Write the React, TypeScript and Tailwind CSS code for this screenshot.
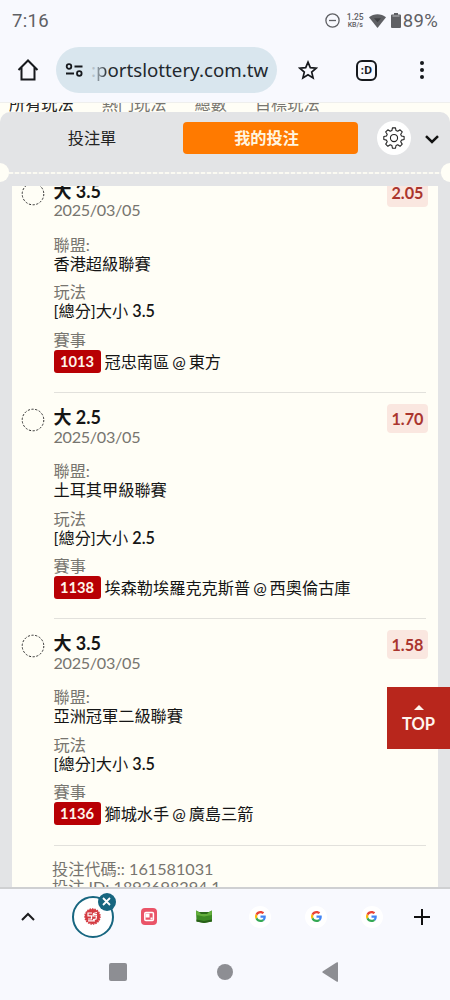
import React from 'react';
import clsx from 'clsx';

type Bet = {
  pick: string;
  date: string;
  odds: string;
  league: string;
  play: string;
  playValue: string;
  code: string;
  match: string;
};

const BETS: Bet[] = [
  { pick: '大 3.5', date: '2025/03/05', odds: '2.05', league: '香港超級聯賽', play: '[總分]大小', playValue: '3.5', code: '1013', match: '冠忠南區 @ 東方' },
  { pick: '大 2.5', date: '2025/03/05', odds: '1.70', league: '土耳其甲級聯賽', play: '[總分]大小', playValue: '2.5', code: '1138', match: '埃森勒埃羅克克斯普 @ 西奧倫古庫' },
  { pick: '大 3.5', date: '2025/03/05', odds: '1.58', league: '亞洲冠軍二級聯賽', play: '[總分]大小', playValue: '3.5', code: '1136', match: '獅城水手 @ 廣島三箭' },
];

const FILTERS = ['所有玩法', '熱門玩法', '總數', '目標玩法'];

const StatusBar = () => (
  <div className="flex h-[41px] shrink-0 items-center pl-[12px] pr-[12px] font-[Roboto,sans-serif] text-[#5f6064]">
    <span className="pt-[3px] text-[18.5px] tracking-[0.3px]">7:16</span>
    <svg className="ml-auto" width="15" height="15" viewBox="0 0 15 15" fill="none" stroke="currentColor" strokeWidth="1.3">
      <circle cx="7.5" cy="7.5" r="6.6" />
      <path d="M4 7.5h7" />
    </svg>
    <div className="ml-[7px] flex w-[17px] flex-col items-center font-medium leading-[8px]">
      <span className="text-[8.5px]">1.25</span>
      <span className="text-[7px]">KB/s</span>
    </div>
    <svg className="ml-[5px]" width="17" height="14" viewBox="0 0 17 14" fill="currentColor">
      <path d="M0 3.2C4.8-.9 12.2-.9 17 3.2L8.5 14z" />
      <path d="M5 4.3h7L8.5 8.2z" fill="#3f4043" />
    </svg>
    <svg className="ml-[5px]" width="10" height="15" viewBox="0 0 10 15" fill="currentColor">
      <path d="M3 0h4v1.5h2a1 1 0 0 1 1 1V14a1 1 0 0 1-1 1H1a1 1 0 0 1-1-1V2.5a1 1 0 0 1 1-1h2z" />
      <path d="M1.5 3h7" stroke="#b9babd" />
    </svg>
    <span className="ml-[2px] pt-[3px] text-[18.5px] tracking-[0.3px]">89%</span>
  </div>
);

const Toolbar = () => (
  <div className="flex h-[61px] shrink-0 items-center pb-[3px] pl-[17px] pr-[17px] text-[#16191d]">
    <svg width="22" height="22" viewBox="0 0 22 22" fill="none" stroke="currentColor" strokeWidth="2">
      <path d="M1.5 11L11 1.5l9.500 9.500M4.500 8.500v12h13v-12" />
    </svg>
    <div className="ml-[17px] flex h-[46px] w-[221px] items-center rounded-full bg-[#d9e6ee] pl-[9px]">
      <svg width="19" height="14" viewBox="0 0 19 14" fill="none" stroke="currentColor" strokeWidth="1.8">
        <circle cx="4" cy="3.5" r="2.3" />
        <path d="M9.5 3.5h8M1 10.5h8" />
        <circle cx="14.3" cy="10.5" r="2.3" />
      </svg>
      <div className="ml-[7px] flex font-['Noto_Sans',sans-serif] text-[18.7px] text-[#22282d]">
        <span className="text-[#b5c1c9]">:</span>
        <span className="bg-gradient-to-r from-[#a3afb7] to-[#22282d] bg-clip-text text-transparent">p</span>
        <span>ortslottery.com.tw</span>
      </div>
    </div>
    <svg className="ml-[21px]" width="20" height="20" viewBox="0 0 20 20" fill="none" stroke="currentColor" strokeWidth="1.7">
      <path d="M10 2.2l2.3 5.5 5.9.5-4.500 3.900 1.400 5.800-5.100-3.100-5.100 3.100 1.400-5.800-4.500-3.900 5.900-.5z" />
    </svg>
    <div className="ml-[38px] flex h-[21px] w-[21px] items-center justify-center rounded-[6px] border-2 border-current pb-px font-['Open_Sans',sans-serif] text-[11px] font-bold leading-none">
      :D
    </div>
    <div className="ml-auto mr-[9px] flex flex-col gap-[3px]">
      <i className="h-[4px] w-[4px] rounded-full bg-current" />
      <i className="h-[4px] w-[4px] rounded-full bg-current" />
      <i className="h-[4px] w-[4px] rounded-full bg-current" />
    </div>
  </div>
);

// outline of an eight-tooth gear
const GearIcon = () => (
  <svg width="22" height="22" viewBox="0 0 24 24" fill="none" stroke="#222" strokeWidth="1.2" strokeLinejoin="round">
    <path d="M10.300 1.500h3.400l.6 3 1.900.8 2.600-1.700 2.400 2.400-1.700 2.600.8 1.900 3 .6v3.400l-3 .6-.8 1.900 1.700 2.600-2.400 2.400-2.600-1.700-1.900.8-.6 3h-3.400l-.6-3-1.900-.8L5.200 22l-2.400-2.400L4.500 17l-.8-1.900-3-.6v-3.400l3-.6.8-1.900L2.800 6l2.400-2.400 2.600 1.700 1.900-.8z" transform="translate(0.2 -0.5) scale(0.98)" />
    <circle cx="12" cy="12" r="3.9" />
  </svg>
);

const SheetHeader = () => (
  <div className="relative h-[74px] shrink-0 rounded-t-[10px] bg-[#e3e4e6]">
    <div className="flex h-[52px] items-center">
      <div className="w-[183px] pl-px text-center text-[16.2px] text-[#222]">投注單</div>
      <div className="flex h-[32px] w-[175px] items-center justify-center rounded-[4px] bg-[#ff7a00] pr-[8px] text-[16.2px] font-bold text-[#fff6e0]">
        我的投注
      </div>
      <div className="ml-[19px] flex h-[34px] w-[34px] items-center justify-center rounded-full bg-white">
        <GearIcon />
      </div>
      <svg className="ml-[14px] mt-[3px]" width="14" height="9" viewBox="0 0 14 9" fill="none" stroke="#111" strokeWidth="2.5">
        <path d="M1 1.200l6 5.800 6-5.800" />
      </svg>
    </div>
    <div className="mx-[9px] mt-[8px] h-[2px] bg-[repeating-linear-gradient(90deg,#fbfaf2_0_4px,#e9e9e8_4px_6px)]" />
    <i className="absolute -left-[9px] top-[51px] h-[19px] w-[18px] rounded-full bg-[#fffef6]" />
    <i className="absolute -right-[9px] top-[51px] h-[19px] w-[18px] rounded-full bg-[#fffef6]" />
  </div>
);

const BetRow = ({ bet }: { bet: Bet }) => (
  <div className="flex h-[226.2px] shrink-0 pl-[9px] pr-[10px]">
    <svg className="mt-[15px] shrink-0" width="24" height="24" viewBox="0 0 24 24" fill="none" stroke="#333" strokeWidth="1">
      <circle cx="12" cy="12" r="10.8" strokeDasharray="2.2 1.57" />
    </svg>
    <div className="relative ml-[8.5px] mr-[2px] flex-1 border-b border-[#e2e1dc] pt-[15px] text-[16.2px] leading-[19px] text-[#151515]">
      <div className="text-[18px] font-bold">{bet.pick}</div>
      <div className="-mt-[0.7px] tracking-[-0.3px] text-[#77756f]">{bet.date}</div>
      <div className="mt-[15.5px] text-[#77756f]">聯盟:</div>
      <div>{bet.league}</div>
      <div className="mt-[9.5px] text-[#77756f]">玩法</div>
      <div>{bet.play} <span className="font-semibold">{bet.playValue}</span></div>
      <div className="mt-[9.5px] text-[#77756f]">賽事</div>
      <div className="flex items-center whitespace-nowrap pt-px [word-spacing:-1.2px]">
        <span className="mr-[4px] flex h-[23px] w-[47px] items-center justify-center rounded-[3px] bg-[#b80004] text-[14.7px] font-bold text-[#fff4ea]">
          {bet.code}
        </span>
        {bet.match}
      </div>
      <div className="absolute -right-[2px] top-[11px] flex h-[29px] w-[41px] items-center justify-center rounded-[4px] bg-[#fae7e0] text-[16.2px] font-bold text-[#aa352e]">
        {bet.odds}
      </div>
    </div>
  </div>
);

const GoogleIcon = () => (
  <div className="flex h-[22px] w-[22px] items-center justify-center rounded-full bg-white">
    <svg width="11" height="11" viewBox="0 0 48 48">
      <path fill="#EA4335" d="M24 9.500c3.540 0 6.710 1.220 9.210 3.600l6.850-6.850C35.900 2.380 30.470 0 24 0 14.620 0 6.510 5.380 2.560 13.220l7.980 6.190C12.430 13.720 17.740 9.500 24 9.500z" />
      <path fill="#4285F4" d="M46.980 24.550c0-1.570-.15-3.090-.38-4.550H24v9.020h12.940c-.58 2.960-2.260 5.480-4.780 7.180l7.730 6c4.510-4.180 7.090-10.360 7.090-17.650z" />
      <path fill="#FBBC05" d="M10.530 28.590c-.48-1.450-.76-2.990-.76-4.590s.27-3.140.76-4.590l-7.980-6.190C.92 16.460 0 20.120 0 24c0 3.880.92 7.540 2.560 10.780l7.970-6.190z" />
      <path fill="#34A853" d="M24 48c6.480 0 11.930-2.130 15.890-5.810l-7.730-6c-2.150 1.450-4.920 2.300-8.160 2.300-6.260 0-11.570-4.220-13.470-9.910l-7.980 6.190C6.510 42.620 14.620 48 24 48z" />
    </svg>
  </div>
);

const TabStrip = () => (
  <div className="flex h-[55px] items-center pl-[21px]">
    <svg width="14" height="9" viewBox="0 0 14 9" fill="none" stroke="#1c1c1e" strokeWidth="2">
      <path d="M1 8l6-6 6 6" />
    </svg>
    <div className="ml-[30px] grid grid-cols-[repeat(6,55.8px)] items-center justify-items-center">
      <div className="relative flex h-[42px] w-[42px] items-center justify-center rounded-full border-2 border-[#176680] bg-white">
        <svg width="17" height="17" viewBox="0 0 17 17" fill="none">
          <circle cx="8.5" cy="8.5" r="7.6" fill="#d43b42" stroke="#d43b42" strokeWidth="1.4" strokeDasharray="1.5 1" />
          <path d="M8 5H4v2.800h3.500V11H4M13 4.500l-3.500 1L9 8h3.500l-.5 3-3 .7M10 6.500h3M4 12.800h7" stroke="#fff" strokeWidth="1.2" />
        </svg>
        <div className="absolute -right-[4px] -top-[5px] flex h-[18px] w-[18px] items-center justify-center rounded-full bg-[#176680]">
          <svg width="9" height="9" viewBox="0 0 9 9" stroke="#fff" strokeWidth="1.8">
            <path d="M1 1l7 7M8 1L1 8" />
          </svg>
        </div>
      </div>
      <svg width="16" height="17" viewBox="0 0 16 17" fill="none">
        <rect width="16" height="17" rx="4" fill="#ea5468" />
        <rect x="3.8" y="4.5" width="8.6" height="8" rx="1" stroke="#fff" strokeWidth="1.5" />
        <path d="M4.500 5.500h4v4h-4z" fill="#fff" />
        <path d="M9.500 9.500h2v2h-2z" fill="#fff" />
      </svg>
      <svg width="18" height="15" viewBox="0 0 18 15">
        <path d="M1 1.500l3 1.500h10l3-1.500v11L9 14l-7.500-1.500z" fill="#3d8a25" />
        <path d="M1 1.500L4 3h10l3-1.500-.3 4.500L9 7.500 1.300 6z" fill="#63ae3c" />
        <path d="M4 3h10l-2 2H6z" fill="#2d6a1b" />
        <path d="M1.500 10.500L9 12l7.800-1.500v2L9 14l-7.500-1.500z" fill="#285f18" />
      </svg>
      <GoogleIcon />
      <GoogleIcon />
      <GoogleIcon />
    </div>
    <svg className="ml-[13px]" width="18" height="18" viewBox="0 0 18 18" stroke="#111" strokeWidth="2">
      <path d="M9 1v16M1 9h16" />
    </svg>
  </div>
);

const NavBar = () => (
  <div className="flex h-[57px] items-center pb-px pl-[109px]">
    <div className="h-[18px] w-[18px] rounded-[2px] bg-[#8d8e93]" />
    <div className="ml-[90px] h-[16px] w-[16px] rounded-full bg-[#8d8e93]" />
    <svg className="ml-[89px]" width="17" height="20" viewBox="0 0 17 20" fill="#8d8e93">
      <path d="M16 .5v19q-.5.500-1.500 0L.8 10.800q-1-.8 0-1.600L14.500.5q1-.5 1.500 0z" />
    </svg>
  </div>
);

const App = () => {
  return (
    <div className="relative flex h-[1000px] w-[450px] flex-col overflow-hidden bg-[#f8f9fe] font-[Lato,'Noto_Sans_CJK_TC',sans-serif]">
      <StatusBar />
      <Toolbar />

      <main className="flex h-[785px] shrink-0 flex-col overflow-hidden border-t border-[#efefed] bg-[#fffef6]">
        {/* market filters, scrolled under the toolbar */}
        <div className="h-[9px] shrink-0 overflow-hidden">
          <div className="-mt-[9px] flex gap-[28px] pl-[9px] text-[16.2px] leading-[20px] text-[#77756f]">
            {FILTERS.map((name, i) => (
              <span key={name} className={clsx(i === 0 && 'text-[#222]')}>{name}</span>
            ))}
          </div>
        </div>

        <SheetHeader />

        <div className="min-h-0 flex-1 bg-[#e3e4e6] pl-[12px] pr-[12px]">
          <div className="flex h-full flex-col overflow-hidden bg-[#fffef6]">
            <div className="-mt-[19px] flex shrink-0 flex-col">
              {BETS.map((bet) => (
                <BetRow key={bet.code} bet={bet} />
              ))}
              <div className="pl-[40px] pt-[14px] text-[16.2px] leading-[18px] text-[#77756f]">
                <div>投注代碼:: 161581031</div>
                <div>投注 ID: 1893698294.1</div>
              </div>
            </div>
          </div>
        </div>
      </main>

      <footer className="shrink-0 border-t-2 border-[#cfd0d2] bg-[#f8f9fe]">
        <TabStrip />
        <NavBar />
      </footer>

      {/* floating back-to-top button */}
      <button className="absolute right-0 top-[687px] flex h-[62px] w-[63px] flex-col items-center bg-[#b8261c] pt-[18px] text-[#fff5ee]">
        <svg width="10" height="5" viewBox="0 0 10 5" fill="currentColor">
          <path d="M5 0l5 5H0z" />
        </svg>
        <span className="mt-[4px] text-[16.5px] font-bold leading-[20px]">TOP</span>
      </button>
    </div>
  );
};

export default App;
